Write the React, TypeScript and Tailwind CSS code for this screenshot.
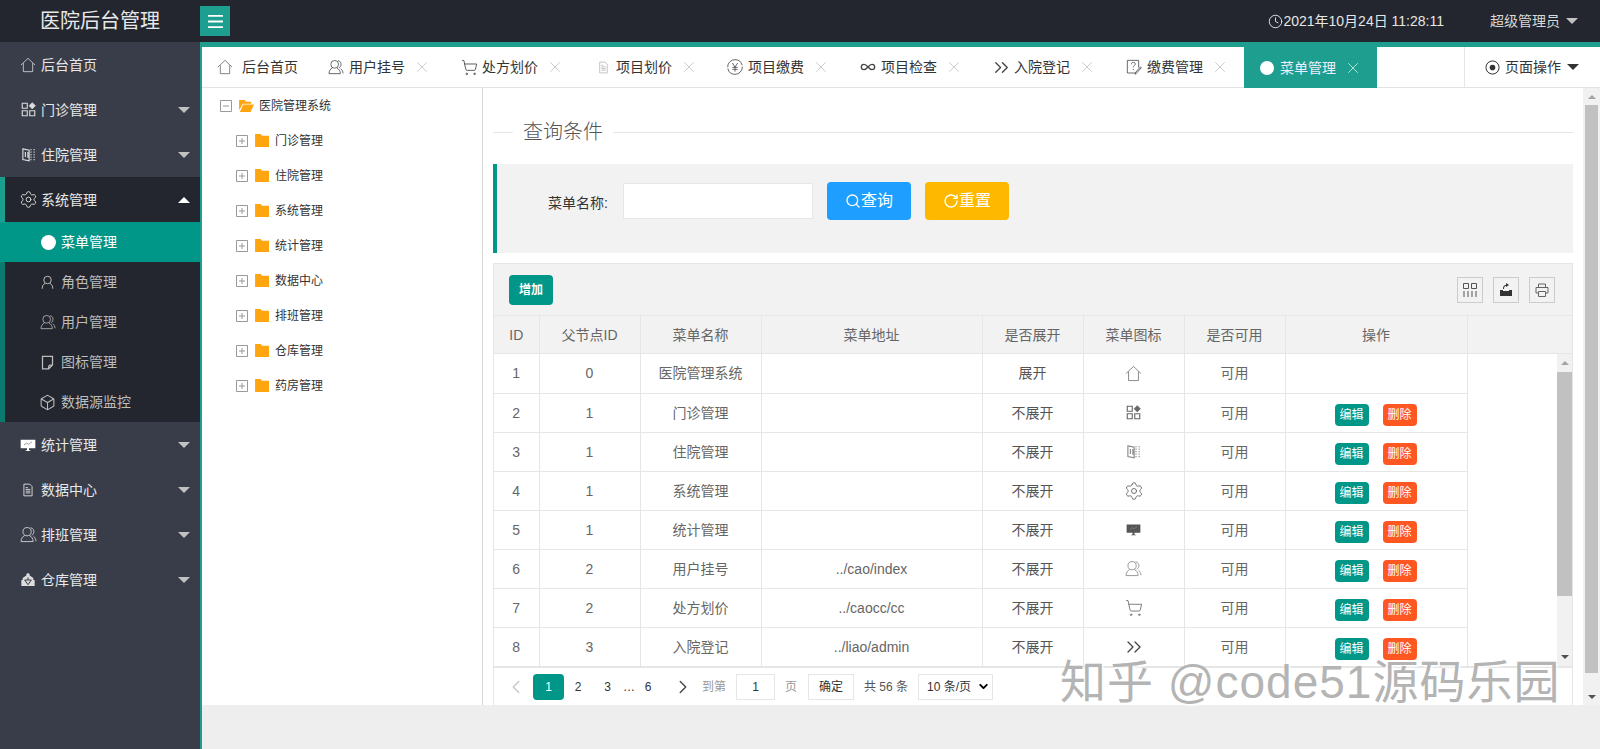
import { ReactNode } from "react";
import { Box, ChevronDown, ChevronLeft, ChevronRight, ChevronsRight, Clock, Infinity as InfinityIcon, RotateCw, Search, Settings, ShoppingCart, X } from "lucide-react";

const Svg = ({ className, children }: { className?: string; children: ReactNode }) => (
  <svg viewBox="0 0 24 24" fill="none" stroke="currentColor" strokeWidth="1.2" className={className}>
    {children}
  </svg>
);

const HomeIcon = ({ className }: { className?: string }) => (
  <Svg className={className}>
    <path d="M1.5 12 12 2l10.5 10M5 9.5V22h14V9.5" />
  </Svg>
);
const AppsIcon = ({ className }: { className?: string }) => (
  <Svg className={className}>
    <path strokeWidth="1.8" d="M2 2h8v8H2zM2 14h8v8H2zM14 14h8v8h-8z" />
    <path fill="currentColor" d="M18 1l5 5-5 5-5-5z" />
  </Svg>
);
const ReadIcon = ({ className }: { className?: string }) => (
  <Svg className={className}>
    <path strokeWidth="1.8" d="M3 3l10 2v17L3 20zM7 8v8M11 8v9" />
    <path strokeWidth="1.8" strokeDasharray="2 2" d="M16 3v18M21 3v18" />
  </Svg>
);
const ChartIcon = ({ className }: { className?: string }) => (
  <Svg className={className}>
    <path fill="currentColor" stroke="none" d="M1 4h22v13h-9.5v2.5l3 1.5h-9l3-1.5V17H1z" />
    <path stroke="#888" strokeWidth="1.2" d="M6 12l4-3 3 2 5-4" />
  </Svg>
);
const FileIcon = ({ className }: { className?: string }) => (
  <Svg className={className}>
    <path strokeWidth="1.6" d="M5 2h10l4 4v16H5zM8 11h8M8 14h8M8 17h8M8 8h4" />
  </Svg>
);
const UsersIcon = ({ className }: { className?: string }) => (
  <Svg className={className}>
    <circle cx="10" cy="8" r="5.8" />
    <path d="M6.5 13.5C3.5 15 1.5 18 1.5 22h17c0-4-2-7-5-8.5M15 2.5c3.5.5 5 3.5 4.5 6.5-.3 2-1.5 3.5-3 4M19 14.5c2 1.5 3.5 4 3.5 7" />
  </Svg>
);
const UserIcon = ({ className }: { className?: string }) => (
  <Svg className={className}>
    <circle cx="12" cy="8" r="6" strokeWidth="1.6" />
    <path strokeWidth="1.6" d="M8 13.5C5 15 3.5 18 3.5 22M16 13.5c3 1.5 4.5 4.5 4.5 8.5" />
  </Svg>
);
const NoteIcon = ({ className }: { className?: string }) => (
  <Svg className={className}>
    <path strokeWidth="2" d="M4 2h16v14l-6 6H4zM20 16h-3.5a2.5 2.5 0 0 0-2.5 2.5V22" />
  </Svg>
);
const StoreIcon = ({ className }: { className?: string }) => (
  <Svg className={className}>
    <path fill="currentColor" stroke="none" d="M12 1l3 3-1 1 6 4v3h2v9H2v-9h2V9l6-4-1-1z" />
    <path stroke="#393D49" strokeWidth="1.5" d="M7 12h10l-5 7zM12 8v4" />
  </Svg>
);
const YenIcon = ({ className }: { className?: string }) => (
  <Svg className={className}>
    <circle cx="12" cy="12" r="11" strokeDasharray="32 2" />
    <path d="M8 6l4 6 4-6M12 12v7M8 12.5h8M8 15.5h8" />
  </Svg>
);
const FormIcon = ({ className }: { className?: string }) => (
  <Svg className={className}>
    <path d="M15 21H2V2h17v11" />
    <path d="M8 8c0-2 1.5-3 3-3s3 1 3 2.5c0 2-3 2.5-3 5M11 15v1.5M23 13l-7 8-2 2 .5-3 7-8z" />
  </Svg>
);
const DotIcon = ({ className }: { className?: string }) => (
  <Svg className={className}>
    <circle cx="12" cy="12" r="10.5" strokeWidth="1.6" />
    <circle cx="12" cy="12" r="4.5" fill="currentColor" stroke="none" />
  </Svg>
);
const MenuDot = ({ className }: { className?: string }) => (
  <Svg className={className}>
    <circle cx="12" cy="12" r="12" fill="currentColor" stroke="none" />
  </Svg>
);
const FolderIcon = ({ open }: { open?: boolean }) => (
  <svg viewBox="0 0 16 14" className="h-[13px] w-[15px]" fill="#ffa50f">
    {open ? <path d="M0 1h6l1.5 2H13v2H4L0 12zM4.5 6H16l-3.5 8H.8z" /> : <path d="M0 0h6l1.5 2H15v12H0z" />}
  </svg>
);
const TreeBox = ({ open }: { open?: boolean }) => (
  <svg viewBox="0 0 12 12" className="h-3 w-3" fill="none" stroke="#999">
    <path d="M.5.5h11v11H.5zM3 6h6" />
    {!open && <path d="M6 3v6" />}
  </svg>
);

const Caret = ({ up, dark }: { up?: boolean; dark?: boolean }) => {
  if (up) return <span className="h-0 w-0 border-x-[6px] border-b-[6px] border-x-transparent border-b-white" />;
  if (dark) return <span className="h-0 w-0 border-x-[6px] border-t-[6px] border-x-transparent border-t-[#333]" />;
  return <span className="h-0 w-0 border-x-[6px] border-t-[6px] border-x-transparent border-t-[#c2c2c2]" />;
};

const SideItem = ({ icon, label, caret, up }: { icon: ReactNode; label: string; caret?: boolean; up?: boolean }) => (
  <div className="flex h-[45px] items-center pl-5 pr-[10px] text-sm text-[#e8e8e8]">
    <span className="mr-[5px] flex h-4 w-4 items-center justify-center text-[#dcdcdc]">{icon}</span>
    <span className="flex-1">{label}</span>
    {caret && <Caret up={up} />}
  </div>
);

const SubItem = ({ icon, label }: { icon: ReactNode; label: string }) => (
  <div className="flex h-10 items-center pl-10 text-sm text-[#bdbdbd]">
    <span className="mr-[6px] flex h-[15px] w-[15px] items-center justify-center">{icon}</span>
    {label}
  </div>
);

const tabs = [
  { label: "用户挂号", w: "w-[133px]", icon: <UsersIcon className="h-4 w-4" /> },
  { label: "处方划价", w: "w-[136px]", icon: <ShoppingCart strokeWidth={1.2} className="h-[17px] w-[17px]" /> },
  { label: "项目划价", w: "w-[130px]", icon: <FileIcon className="h-[13px] w-[13px] text-[#bbb]" />, pad: "w-[19px]" },
  { label: "项目缴费", w: "w-[133px]", icon: <YenIcon className="h-4 w-4" /> },
  { label: "项目检查", w: "w-[133px]", icon: <InfinityIcon strokeWidth={2} className="h-4 w-4" /> },
  { label: "入院登记", w: "w-[133px]", icon: <ChevronsRight strokeWidth={1.4} className="-ml-[3px] h-[23px] w-[23px] shrink-0" /> },
  { label: "缴费管理", w: "w-[133px]", icon: <FormIcon className="h-4 w-4" /> },
];

const rows = [
  { id: 1, pid: 0, name: "医院管理系统", url: "", open: "展开", icon: <HomeIcon className="h-[17px] w-[17px] text-[#777]" />, ops: false },
  { id: 2, pid: 1, name: "门诊管理", url: "", open: "不展开", icon: <AppsIcon className="h-[15px] w-[15px] text-[#666]" />, ops: true },
  { id: 3, pid: 1, name: "住院管理", url: "", open: "不展开", icon: <ReadIcon className="h-[15px] w-[15px] text-[#888]" />, ops: true },
  { id: 4, pid: 1, name: "系统管理", url: "", open: "不展开", icon: <Settings strokeWidth={1.1} className="h-5 w-5 text-[#666]" />, ops: true },
  { id: 5, pid: 1, name: "统计管理", url: "", open: "不展开", icon: <ChartIcon className="h-[15px] w-[15px] text-[#555]" />, ops: true },
  { id: 6, pid: 2, name: "用户挂号", url: "../cao/index", open: "不展开", icon: <UsersIcon className="h-[17px] w-[17px] text-[#888]" />, ops: true },
  { id: 7, pid: 2, name: "处方划价", url: "../caocc/cc", open: "不展开", icon: <ShoppingCart strokeWidth={1.1} className="h-[18px] w-[18px] text-[#666]" />, ops: true },
  { id: 8, pid: 3, name: "入院登记", url: "../liao/admin", open: "不展开", icon: <ChevronsRight strokeWidth={1.3} className="h-6 w-6 text-[#444]" />, ops: true },
];

const treeItems = ["门诊管理", "住院管理", "系统管理", "统计管理", "数据中心", "排班管理", "仓库管理", "药房管理"];

const cols = (
  <colgroup>
    <col className="w-[45px]" />
    <col className="w-[101px]" />
    <col className="w-[121px]" />
    <col className="w-[221px]" />
    <col className="w-[101px]" />
    <col className="w-[101px]" />
    <col className="w-[101px]" />
    <col className="w-[182px]" />
  </colgroup>
);

const headers = ["ID", "父节点ID", "菜单名称", "菜单地址", "是否展开", "菜单图标", "是否可用", "操作"];

const App = () => {
  return (
    <div className="relative flex h-[749px] w-[1600px] flex-col overflow-hidden bg-white font-['Liberation_Sans','Noto_Sans_CJK_SC',sans-serif]">
      {/* header */}
      <header className="flex h-[42px] shrink-0 items-center bg-[#23262e]">
        <div className="w-[200px] pl-10 text-xl text-[#e8e8e8]">医院后台管理</div>
        <div className="flex h-[30px] w-[30px] items-center justify-center bg-[#1e9e8e] text-white">
          <svg viewBox="0 0 16 14" className="h-[13px] w-[15px]" fill="none" stroke="currentColor" strokeWidth="2">
            <path d="M0 1h16M0 7h16M0 13h16" />
          </svg>
        </div>
        <div className="flex-1" />
        <div className="flex items-center text-sm text-[#e6e6e6]">
          <Clock strokeWidth={1.5} className="h-[15px] w-[15px]" />
          <span>2021年10月24日 11:28:11</span>
        </div>
        <div className="ml-[46px] mr-[22px] flex items-center gap-[6px] text-sm text-[#d8d8d8]">
          超级管理员
          <Caret />
        </div>
      </header>

      <div className="flex min-h-0 flex-1">
        {/* sidebar */}
        <aside className="w-[200px] shrink-0 bg-[#393d49]">
          <SideItem icon={<HomeIcon className="h-4 w-4" />} label="后台首页" />
          <SideItem icon={<AppsIcon className="h-[15px] w-[15px]" />} label="门诊管理" caret />
          <SideItem icon={<ReadIcon className="h-[15px] w-[15px]" />} label="住院管理" caret />
          <div className="border-l-[5px] border-[#0b7a6c] bg-[#23262e]">
            <div className="-ml-[5px] border-l-[5px] border-[#1a9e8e]">
              <div className="-ml-[5px]">
                <SideItem icon={<Settings strokeWidth={1.2} className="h-[19px] w-[19px] shrink-0" />} label="系统管理" caret up />
              </div>
            </div>
            <div className="-ml-[5px] flex h-10 items-center bg-[#009688] pl-[41px] text-sm text-white">
              <MenuDot className="mr-[5px] h-[15px] w-[15px] text-white" />
              菜单管理
            </div>
            <div className="-ml-[5px] border-l-[5px] border-[#0b7a6c]">
              <div className="-ml-[5px]">
                <SubItem icon={<UserIcon className="h-[15px] w-[15px]" />} label="角色管理" />
                <SubItem icon={<UsersIcon className="h-4 w-4 shrink-0" />} label="用户管理" />
                <SubItem icon={<NoteIcon className="h-[15px] w-[15px]" />} label="图标管理" />
                <SubItem icon={<Box strokeWidth={1.5} className="h-[17px] w-[17px] shrink-0" />} label="数据源监控" />
              </div>
            </div>
          </div>
          <SideItem icon={<ChartIcon className="h-4 w-4 text-white" />} label="统计管理" caret />
          <SideItem icon={<FileIcon className="h-[14px] w-[14px]" />} label="数据中心" caret />
          <SideItem icon={<UsersIcon className="h-[17px] w-[17px] shrink-0" />} label="排班管理" caret />
          <SideItem icon={<StoreIcon className="h-4 w-4" />} label="仓库管理" caret />
        </aside>

        {/* main */}
        <main className="flex min-w-0 flex-1 flex-col border-l-2 border-t-[5px] border-[#1e9e8e] bg-[#eee]">
          {/* tabs */}
          <div className="flex h-[41px] shrink-0 border-b border-[#e2e2e2] bg-white text-sm text-[#333]">
            <div className="flex w-[111px] items-center pl-[15px]">
              <span className="w-[25px]">
                <HomeIcon className="h-4 w-4 text-[#666]" />
              </span>
              后台首页
            </div>
            {tabs.map((t) => (
              <div key={t.label} className={`flex items-center pl-[15px] ${t.w}`}>
                <span className={`flex shrink-0 items-center text-[#444] ${t.pad ?? "w-[21px]"}`}>{t.icon}</span>
                {t.label}
                <X strokeWidth={1} className="ml-[8px] h-[18px] w-[18px] text-[#bbb]" />
              </div>
            ))}
            <div className="relative z-10 flex h-[41px] w-[133px] items-center bg-[#1e9e8e] pl-4 text-[#eef]">
              <MenuDot className="mr-[6px] h-[14px] w-[14px] text-white" />
              菜单管理
              <X strokeWidth={1} className="ml-[8px] h-[18px] w-[18px] text-[#cfe]" />
            </div>
            <div className="flex-1" />
            <div className="flex w-[136px] items-center border-l border-[#e6e6e6] pl-5">
              <DotIcon className="mr-[5px] h-[15px] w-[15px]" />
              页面操作
              <span className="ml-[6px] flex items-center">
                <Caret dark />
              </span>
            </div>
          </div>

          <div className="flex h-[617px] shrink-0 bg-white">
            {/* tree */}
            <div className="w-[281px] shrink-0 border-r border-[#d8d8d8] pl-[18px] text-xs text-[#333]">
              <div className="flex h-[35px] items-center">
                <TreeBox open />
                <span className="ml-[7px]">
                  <FolderIcon open />
                </span>
                <span className="ml-[5px]">医院管理系统</span>
              </div>
              {treeItems.map((t) => (
                <div key={t} className="flex h-[35px] items-center pl-4">
                  <TreeBox />
                  <span className="ml-[7px]">
                    <FolderIcon />
                  </span>
                  <span className="ml-[5px]">{t}</span>
                </div>
              ))}
            </div>

            {/* content */}
            <div className="flex min-w-0 flex-1 flex-col pl-[10px] pr-[10px]">
              <div className="flex h-[76px] shrink-0 items-center pt-3 text-xl font-light text-[#555]">
                <span className="h-px w-[20px] bg-[#e6e6e6]" />
                <span className="ml-[10px] mr-[10px]">查询条件</span>
                <span className="h-px flex-1 bg-[#e6e6e6]" />
              </div>

              <div className="flex h-[89px] shrink-0 items-start border-l-4 border-[#009688] bg-[#f2f2f2] pt-[18px]">
                <span className="mt-[11px] w-[111px] text-right text-sm text-[#333]">菜单名称:</span>
                <div className="ml-[15px] mt-px h-9 w-[190px] border border-[#e6e6e6] bg-white" />
                <button className="ml-[14px] flex h-[38px] w-[84px] items-center justify-center rounded-sm bg-[#1e9fff] text-base text-white">
                  <Search strokeWidth={2} className="h-4 w-4" />
                  查询
                </button>
                <button className="ml-[14px] flex h-[38px] w-[84px] items-center justify-center rounded-sm bg-[#ffb800] text-base text-white">
                  <RotateCw strokeWidth={2} className="h-4 w-4" />
                  重置
                </button>
              </div>

              <div className="mt-[10px] flex min-h-0 flex-1 flex-col border-x border-t border-[#e6e6e6]">
                {/* toolbar */}
                <div className="flex h-[51px] shrink-0 items-start justify-between bg-[#f2f2f2] pl-[15px] pr-4 pt-[11px]">
                  <button className="flex h-[30px] w-[44px] items-center justify-center rounded-sm bg-[#009688] text-xs font-bold text-white">增加</button>
                  <div className="mt-[2px] flex gap-[10px] pr-[1px]">
                    <div className="flex h-[26px] w-[26px] items-center justify-center border border-[#ccc] text-[#555]">
                      <svg viewBox="0 0 14 14" className="h-[14px] w-[14px]" fill="none" stroke="currentColor">
                        <path d="M.5.5h5v5h-5zM8.5.5h5v5h-5zM1 8v6M5 8v6M9 8v6M13 8v6" />
                      </svg>
                    </div>
                    <div className="flex h-[26px] w-[26px] items-center justify-center border border-[#ccc] text-[#333]">
                      <svg viewBox="0 0 14 14" className="h-[14px] w-[14px]" fill="currentColor">
                        <path d="M1 7h3v1h6V7h3v6H1zM7 0l3 2-3 2V3C5.5 3 5 4 5 6H4c0-3 1-4 3-4z" />
                      </svg>
                    </div>
                    <div className="flex h-[26px] w-[26px] items-center justify-center border border-[#ccc] text-[#666]">
                      <svg viewBox="0 0 14 14" className="h-[14px] w-[14px]" fill="none" stroke="currentColor">
                        <path d="M3.5 4V1h7v3M3.5 10H1V4.5h12V10h-2.5M3.5 8.5h7v5h-7z" />
                      </svg>
                    </div>
                  </div>
                </div>

                {/* header row */}
                <div className="flex shrink-0 border-y border-[#e6e6e6] bg-[#f2f2f2]">
                  <table className="w-[973px] table-fixed border-collapse text-sm text-[#666]">
                    {cols}
                    <thead>
                      <tr className="h-[37px]">
                        {headers.map((h) => (
                          <th key={h} className="border-r border-[#e6e6e6] text-center font-normal">
                            {h}
                          </th>
                        ))}
                      </tr>
                    </thead>
                  </table>
                </div>

                {/* body */}
                <div className="flex h-[312px] shrink-0">
                  <table className="h-fit w-[973px] table-fixed border-collapse text-sm text-[#666]">
                    {cols}
                    <tbody>
                      {rows.map((r) => (
                        <tr key={r.id} className="h-[39px] border-b border-[#e6e6e6]">
                          <td className="border-r border-[#e6e6e6] text-center">{r.id}</td>
                          <td className="border-r border-[#e6e6e6] text-center">{r.pid}</td>
                          <td className="border-r border-[#e6e6e6] text-center">{r.name}</td>
                          <td className="border-r border-[#e6e6e6] text-center">{r.url}</td>
                          <td className="border-r border-[#e6e6e6] text-center text-[#555]">{r.open}</td>
                          <td className="border-r border-[#e6e6e6]">
                            <span className="flex justify-center">{r.icon}</span>
                          </td>
                          <td className="border-r border-[#e6e6e6] text-center">可用</td>
                          <td className="border-r border-[#e6e6e6]">
                            {r.ops && (
                              <div className="mt-[5px] flex justify-center gap-[14px] pr-[1px]">
                                <span className="flex h-[22px] w-[34px] items-center justify-center rounded-sm bg-[#009688] text-xs text-white">编辑</span>
                                <span className="flex h-[22px] w-[34px] items-center justify-center rounded-sm bg-[#ff5722] text-xs text-white">删除</span>
                              </div>
                            )}
                          </td>
                        </tr>
                      ))}
                    </tbody>
                  </table>
                  <div className="flex-1" />
                  <div className="flex w-[15px] flex-col bg-[#f1f1f1]">
                    <div className="flex h-[18px] items-center justify-center">
                      <span className="h-0 w-0 border-x-4 border-b-4 border-x-transparent border-b-[#a3a3a3]" />
                    </div>
                    <div className="h-[224px] bg-[#c1c1c1]" />
                    <div className="flex-1" />
                    <div className="flex h-[18px] items-center justify-center">
                      <span className="h-0 w-0 border-x-4 border-t-4 border-x-transparent border-t-[#505050]" />
                    </div>
                  </div>
                </div>

                {/* pagination */}
                <div className="flex flex-1 items-center border-t-2 border-[#e6e6e6] text-xs text-[#333]">
                  <ChevronLeft strokeWidth={1.5} className="ml-[11px] h-[22px] w-[22px] text-[#c8c8c8]" />
                  <span className="ml-[6px] flex h-[26px] w-[31px] items-center justify-center rounded-sm bg-[#009688] text-white">1</span>
                  <span className="w-[28px] text-center">2</span>
                  <span className="w-[31px] text-center">3</span>
                  <span className="w-[8px] text-center">…</span>
                  <span className="ml-[2px] w-[30px] text-center">6</span>
                  <ChevronRight strokeWidth={1.5} className="ml-[9px] h-[22px] w-[22px] text-[#444]" />
                  <span className="ml-[8px] text-[#999]">到第</span>
                  <span className="ml-[10px] flex h-[26px] w-[39px] items-center justify-center border border-[#e6e6e6]">1</span>
                  <span className="ml-[10px] text-[#999]">页</span>
                  <span className="ml-[11px] flex h-[26px] w-[46px] items-center justify-center border border-[#e6e6e6]">确定</span>
                  <span className="ml-[10px] text-[#555]">共 56 条</span>
                  <span className="ml-[10px] flex h-[26px] w-[75px] items-center justify-between border border-[#e6e6e6] pl-2 pr-[2px]">
                    10 条/页
                    <ChevronDown strokeWidth={3.5} className="h-[13px] w-[13px] text-black" />
                  </span>
                </div>
              </div>
            </div>

            {/* page scrollbar */}
            <div className="flex w-[17px] shrink-0 flex-col bg-[#f1f1f1]">
              <div className="flex h-[17px] items-center justify-center">
                <span className="h-0 w-0 border-x-4 border-b-4 border-x-transparent border-b-[#a3a3a3]" />
              </div>
              <div className="mx-[2px] h-[568px] bg-[#c1c1c1]" />
              <div className="flex-1" />
              <div className="flex h-[17px] items-center justify-center">
                <span className="h-0 w-0 border-x-4 border-t-4 border-x-transparent border-t-[#505050]" />
              </div>
            </div>
          </div>
        </main>
      </div>

      {/* watermark */}
      <div className="pointer-events-none absolute left-[1060px] top-[651px] whitespace-nowrap text-[46px] leading-[62px] tracking-[1px] text-[#b4b4b4] [text-shadow:2px_2px_1px_rgba(255,255,255,0.8)]">
        知乎 @code51源码乐园
      </div>
    </div>
  );
};

export default App;
